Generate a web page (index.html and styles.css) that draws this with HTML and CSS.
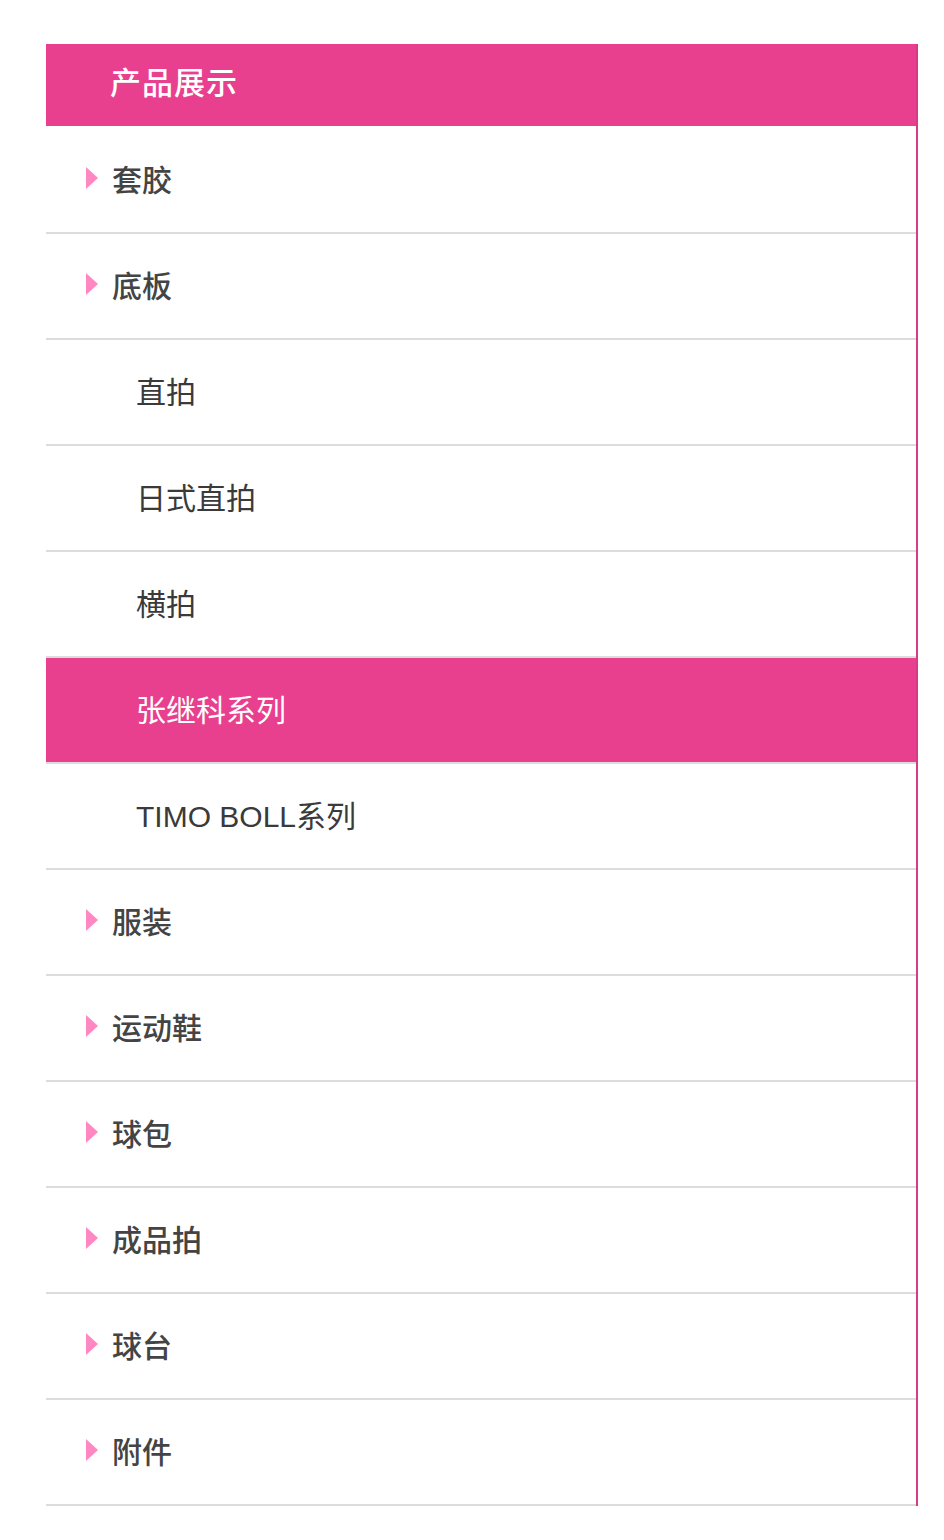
FILE: index.html
```html
<!DOCTYPE html>
<html lang="zh-CN">
<head>
<meta charset="utf-8">
<title>产品展示</title>
<link rel="stylesheet" href="styles.css">
</head>
<body>
<div class="panel">
  <div class="panel-title">产品展示</div>
  <ul class="menu">
    <li class="item"><span class="arrow"></span>套胶</li>
    <li class="item"><span class="arrow"></span>底板</li>
    <li class="item sub">直拍</li>
    <li class="item sub">日式直拍</li>
    <li class="item sub">横拍</li>
    <li class="item sub active">张继科系列</li>
    <li class="item sub">TIMO BOLL系列</li>
    <li class="item"><span class="arrow"></span>服装</li>
    <li class="item"><span class="arrow"></span>运动鞋</li>
    <li class="item"><span class="arrow"></span>球包</li>
    <li class="item"><span class="arrow"></span>成品拍</li>
    <li class="item"><span class="arrow"></span>球台</li>
    <li class="item"><span class="arrow"></span>附件</li>
  </ul>
</div>
</body>
</html>
```
FILE: styles.css
```css
html, body {
  margin: 0;
  padding: 0;
  background: #fff;
}
body {
  padding: 44px 26px 0 46px;
  font-family: "Liberation Sans", "Noto Sans CJK SC", sans-serif;
}
.panel {
  width: 870px;
  border-right: 2px solid #d93a87;
}
.panel-title {
  height: 82px;
  background: #e8408e;
  color: #fff;
  font-size: 31px;
  font-weight: 500;
  line-height: 80px;
  padding-left: 64px;
  letter-spacing: 1px;
}
.menu {
  list-style: none;
  margin: 0;
  padding: 2px 0 0;
}
.item {
  box-sizing: border-box;
  height: 106px;
  padding-bottom: 4px;
  border-bottom: 2px solid #dcdcdc;
  display: flex;
  align-items: center;
  padding-left: 40px;
  font-size: 30px;
  font-weight: 500;
  color: #444;
}
.item.sub {
  padding-left: 90px;
  font-weight: 400;
  color: #3a3a3a;
}
.item.active {
  background: #e8408e;
  color: #fff;
  height: 108px;
  margin-top: -2px;
  border-top: 2px solid #dcdcdc;
  padding-bottom: 4px;
}
.arrow {
  width: 0;
  height: 0;
  border-top: 11px solid transparent;
  border-bottom: 11px solid transparent;
  border-left: 12px solid #ff88c2;
  margin-right: 14px;
}
```
